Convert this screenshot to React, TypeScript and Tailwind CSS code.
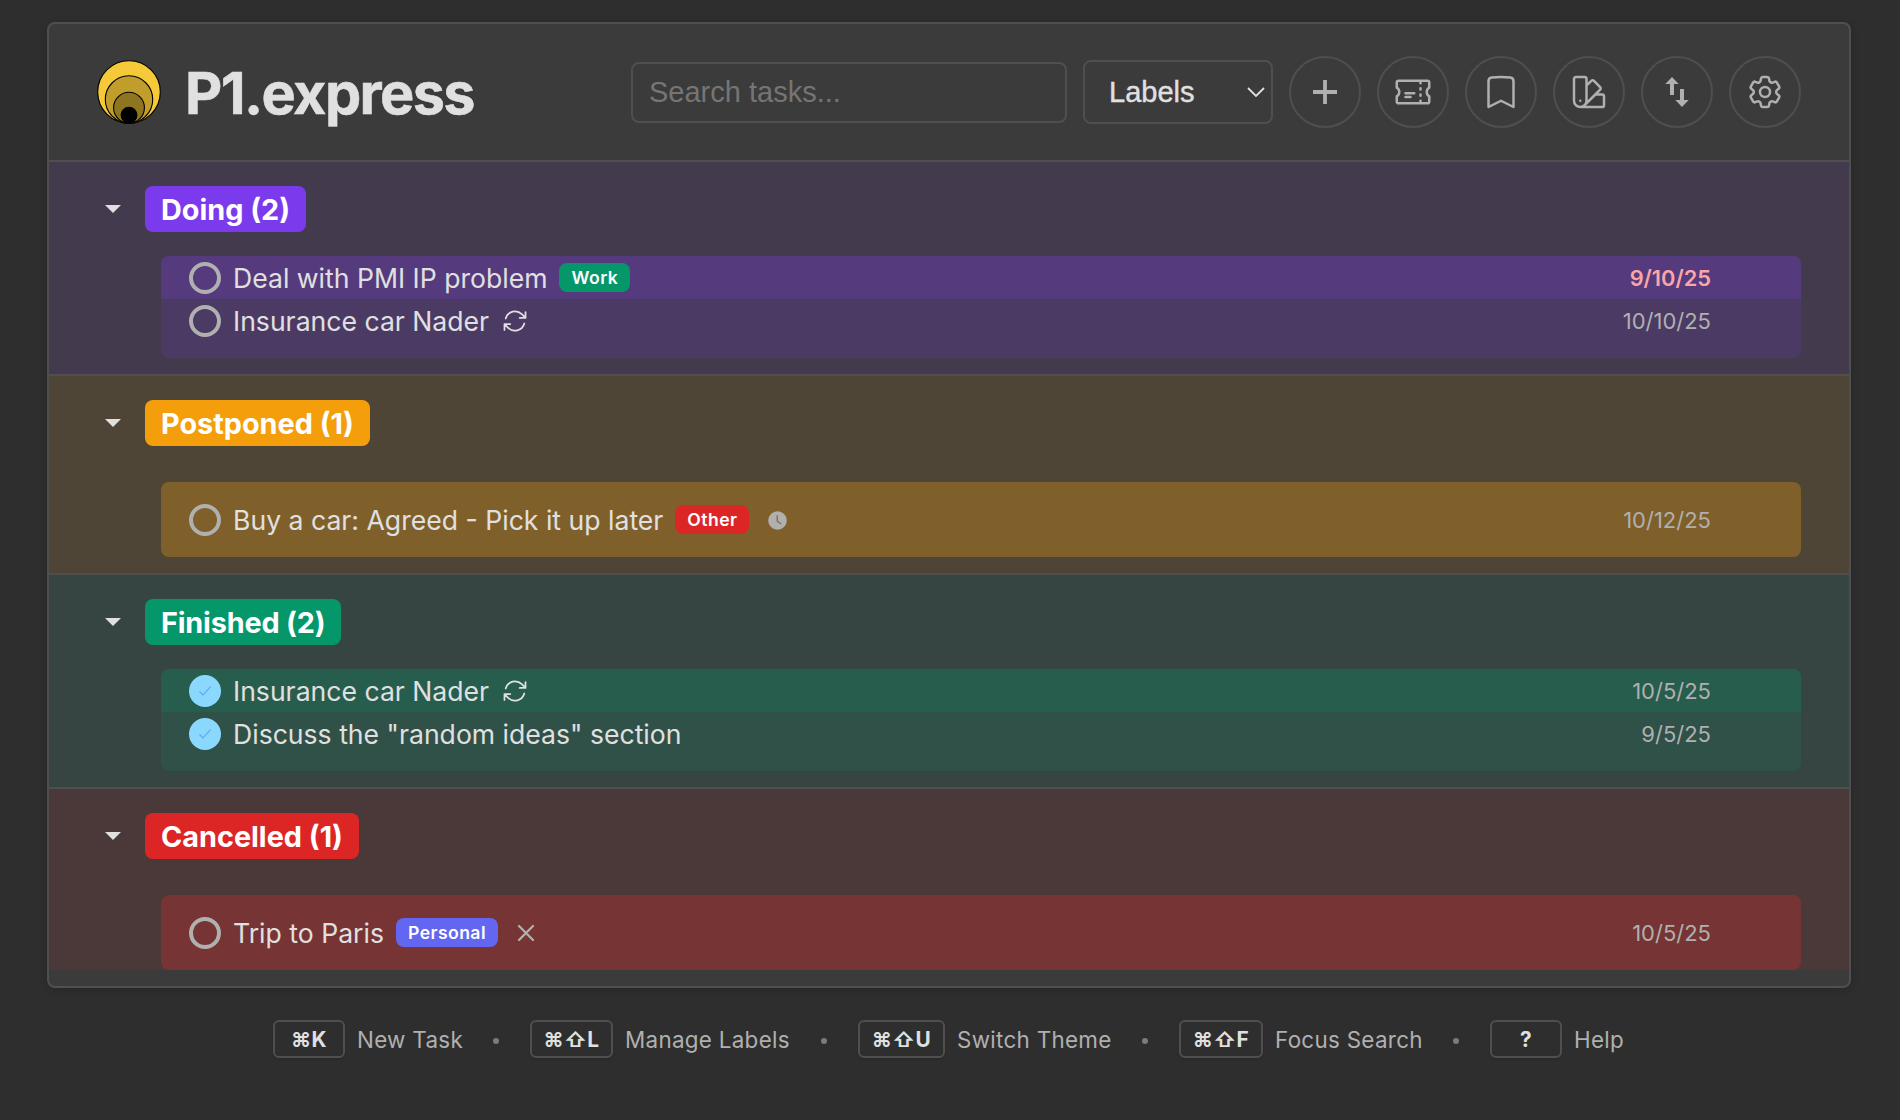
import type { ReactNode } from "react";
import {
  HiOutlineTicket,
  HiOutlineBookmark,
  HiOutlineSwatch,
  HiOutlineCog6Tooth,
  HiOutlineArrowPath,
  HiOutlineXMark,
} from "react-icons/hi2";

type Mark = "repeat" | "clock" | "cancel";

interface Task {
  title: string;
  date: string;
  done?: boolean;
  overdue?: boolean;
  label?: { text: string; color: string };
  mark?: Mark;
}

interface Section {
  name: string;
  bg: string;
  badge: string;
  list: string;
  firstRow: string;
  tasks: Task[];
}

const sections: Section[] = [
  {
    name: "Doing",
    bg: "bg-[#433b4d]",
    badge: "bg-[#7c3aed]",
    list: "bg-[#4b3b64]",
    firstRow: "bg-[#553b7d]",
    tasks: [
      {
        title: "Deal with PMI IP problem",
        date: "9/10/25",
        overdue: true,
        label: { text: "Work", color: "bg-[#059669]" },
      },
      { title: "Insurance car Nader", date: "10/10/25", mark: "repeat" },
    ],
  },
  {
    name: "Postponed",
    bg: "bg-[#4e4536]",
    badge: "bg-[#f59e0b]",
    list: "bg-[#80602a]",
    firstRow: "bg-[#80602a]",
    tasks: [
      {
        title: "Buy a car: Agreed - Pick it up later",
        date: "10/12/25",
        label: { text: "Other", color: "bg-[#dc2626]" },
        mark: "clock",
      },
    ],
  },
  {
    name: "Finished",
    bg: "bg-[#364541]",
    badge: "bg-[#059669] tracking-[-0.18px]",
    list: "bg-[#2f5147]",
    firstRow: "bg-[#275d4c]",
    tasks: [
      { title: "Insurance car Nader", date: "10/5/25", done: true, mark: "repeat" },
      { title: 'Discuss the "random ideas" section', date: "9/5/25", done: true },
    ],
  },
  {
    name: "Cancelled",
    bg: "bg-[#4b3939]",
    badge: "bg-[#dc2626]",
    list: "bg-[#763434]",
    firstRow: "bg-[#763434]",
    tasks: [
      {
        title: "Trip to Paris",
        date: "10/5/25",
        label: { text: "Personal", color: "bg-[#6366f1]" },
        mark: "cancel",
      },
    ],
  },
];

const shortcuts = [
  { keys: "⌘K", text: "New Task", box: "w-[72px]", slot: "w-[104px]" },
  { keys: "⌘⇧L", text: "Manage Labels", box: "w-[83px]", slot: "w-[164px]" },
  { keys: "⌘⇧U", text: "Switch Theme", box: "w-[87px]", slot: "w-[153px]" },
  { keys: "⌘⇧F", text: "Focus Search", box: "w-[84px]", slot: "w-[146px]" },
  { keys: "?", text: "Help", box: "w-[72px]", slot: "w-[52px]" },
];

function Logo() {
  return (
    <svg className="h-16 w-16" viewBox="0 0 64 64" stroke="#000" strokeWidth="1.1">
      <circle cx="32" cy="32" r="31.3" fill="#f5c938" />
      <circle cx="32" cy="39.5" r="23.7" fill="#c19e2b" />
      <circle cx="32" cy="47.7" r="15.4" fill="#8e7520" />
      <circle cx="32" cy="55.2" r="7.9" fill="#000" />
    </svg>
  );
}

function RoundButton({ children }: { children: ReactNode }) {
  return (
    <button className="flex h-[72px] w-[72px] items-center justify-center rounded-full border-2 border-[#4f4f4f] text-[#b0b0b0]">
      {children}
    </button>
  );
}

function Header() {
  return (
    <header className="flex h-[138px] items-center gap-4 border-b-2 border-[#4f4f4f] px-12">
      <div className="flex flex-1 items-center gap-6">
        <Logo />
        <h1 className="pt-1 text-[57.6px] leading-none font-bold tracking-[-0.028em] [-webkit-text-stroke:0.5px_#e0e0e0]">
          P1.express
        </h1>
      </div>
      <div className="flex h-[61px] w-[436px] items-center rounded-lg border-2 border-[#4f4f4f] px-4 pt-[2px] font-['Liberation_Sans',Arial,sans-serif] text-[29px] text-[#757575]">
        Search tasks...
      </div>
      <div className="flex h-16 w-[190px] items-center justify-between rounded-lg border-2 border-[#4f4f4f] pr-[6px] pl-6 font-['Liberation_Sans',Arial,sans-serif] text-[29px] [-webkit-text-stroke:0.4px_#e0e0e0]">
        <span className="pt-[2px]">Labels</span>
        <svg className="h-3 w-[18px]" viewBox="0 0 18 12" fill="none" stroke="#e0e0e0" strokeWidth="1.8">
          <path d="M1 2l8 8 8-8" />
        </svg>
      </div>
      <RoundButton>
        <svg className="h-6 w-6" viewBox="0 0 24 24" stroke="currentColor" strokeWidth="3.8">
          <path d="M12 0v24M0 12h24" />
        </svg>
      </RoundButton>
      <RoundButton>
        <HiOutlineTicket className="h-10 w-10" />
      </RoundButton>
      <RoundButton>
        <HiOutlineBookmark className="h-10 w-10" />
      </RoundButton>
      <RoundButton>
        <HiOutlineSwatch className="h-10 w-10" />
      </RoundButton>
      <RoundButton>
        <svg className="h-[30px] w-6" viewBox="0 0 24 30" fill="currentColor">
          <path d="M7 0l6.7 7H9v11H5V7H.3zM15 12h4v11h4.7L17 30l-6.7-7H15z" />
        </svg>
      </RoundButton>
      <RoundButton>
        <HiOutlineCog6Tooth className="h-10 w-10" />
      </RoundButton>
    </header>
  );
}

function StatusCircle({ done }: { done?: boolean }) {
  if (!done) return <span className="h-8 w-8 rounded-full border-4 border-[#b0b0b0]" />;
  return (
    <span className="flex h-8 w-8 items-center justify-center rounded-full bg-[#8bd8ff]">
      <svg className="h-[10px] w-3" viewBox="0 0 12 10" fill="none" stroke="#5aa5f5" strokeWidth="1.1" strokeLinecap="round" strokeLinejoin="round">
        <path d="M.7 5.6L4 9 11.3.9" />
      </svg>
    </span>
  );
}

function ClockIcon() {
  return (
    <svg className="h-[19px] w-[19px]" viewBox="0 0 19 19">
      <circle cx="9.5" cy="9.5" r="9.3" fill="#b0b0b0" />
      <path d="M9.2 4.2v6l4 2.8" fill="none" stroke="#8a7648" strokeWidth="1.5" />
    </svg>
  );
}

function MarkIcon({ mark }: { mark: Mark }) {
  return (
    <span className="flex w-8 items-center justify-center">
      {mark === "repeat" && <HiOutlineArrowPath className="-ml-1 h-7 w-7 text-[#e0e0e0]" />}
      {mark === "clock" && <ClockIcon />}
      {mark === "cancel" && <HiOutlineXMark className="h-7 w-7 text-[#b0b0b0] [&_path]:stroke-[2]" />}
    </span>
  );
}

function TaskRow({ task }: { task: Task }) {
  return (
    <div className="flex h-[43px] items-center pt-px pr-[90px] pl-7">
      <StatusCircle done={task.done} />
      <div className="flex flex-1 items-center gap-3 pl-3">
        <span className="text-[26.6px] leading-none">{task.title}</span>
        {task.label && (
          <span
            className={`mb-px flex h-[29px] items-center rounded-lg px-3 text-[17.6px] leading-none font-semibold tracking-[0.025em] text-white ${task.label.color}`}
          >
            {task.label.text}
          </span>
        )}
        {task.mark && <MarkIcon mark={task.mark} />}
      </div>
      <span
        className={
          task.overdue
            ? "pt-px text-[21.8px] leading-none font-semibold text-[#fca5a5]"
            : "text-[22px] leading-none text-[#b0b0b0]"
        }
      >
        {task.date}
      </span>
    </div>
  );
}

function TaskSection({ section, last }: { section: Section; last: boolean }) {
  const single = section.tasks.length === 1;
  return (
    <section className={`${section.bg} ${last ? "" : "border-b-2 border-[#4f4f4f] pb-4"} pr-12 pl-14 pt-6`}>
      <div className="flex items-center gap-6">
        <svg className="h-2 w-4" viewBox="0 0 16 8" fill="#e0e0e0">
          <path d="M0 0h16L8 8z" />
        </svg>
        <h2
          className={`flex h-[46px] items-center rounded-lg px-4 pt-[2px] text-[28.8px] leading-none font-bold text-white ${section.badge}`}
        >
          {section.name} ({section.tasks.length})
        </h2>
      </div>
      <div className={`ml-14 overflow-hidden rounded-lg ${section.list} ${single ? "mt-9 py-4" : "mt-6 pb-4"}`}>
        {section.tasks.map((task, i) => (
          <div key={task.title} className={i === 0 ? section.firstRow : ""}>
            <TaskRow task={task} />
          </div>
        ))}
      </div>
    </section>
  );
}

export default function App() {
  return (
    <div className="h-[1120px] w-[1900px] overflow-hidden bg-[#2e2e2e] pt-[22px] font-['Inter',sans-serif] text-[#e0e0e0]">
      <main className="ml-[47px] w-[1804px] overflow-hidden rounded-lg border-2 border-[#4f4f4f] bg-[#3b3b3b] pb-4 shadow-[0_2px_8px_rgba(0,0,0,0.15)]">
        <Header />
        {sections.map((s, i) => (
          <TaskSection key={s.name} section={s} last={i === sections.length - 1} />
        ))}
      </main>
      <footer className="mt-8 ml-[273px] flex items-center">
        {shortcuts.map((s, i) => (
          <div key={s.text} className="flex items-center">
            <kbd
              className={`flex h-[38px] items-center justify-center rounded-md border-2 border-[#4f4f4f] pt-[2px] font-['Inter',sans-serif] text-[20.8px] leading-none font-bold tracking-[0.02em] shadow-[0_2px_2px_rgba(0,0,0,0.1)] ${s.box}`}
            >
              {s.keys}
            </kbd>
            <span className={`ml-3 pt-[2px] text-[22.4px] leading-none tracking-[0.3px] whitespace-nowrap text-[#b0b0b0] ${s.slot}`}>
              {s.text}
            </span>
            {i < shortcuts.length - 1 && (
              <span className="mt-[3px] mr-[31px] ml-[32px] h-[6px] w-[6px] rounded-full bg-[#7c7c7c]" />
            )}
          </div>
        ))}
      </footer>
    </div>
  );
}
